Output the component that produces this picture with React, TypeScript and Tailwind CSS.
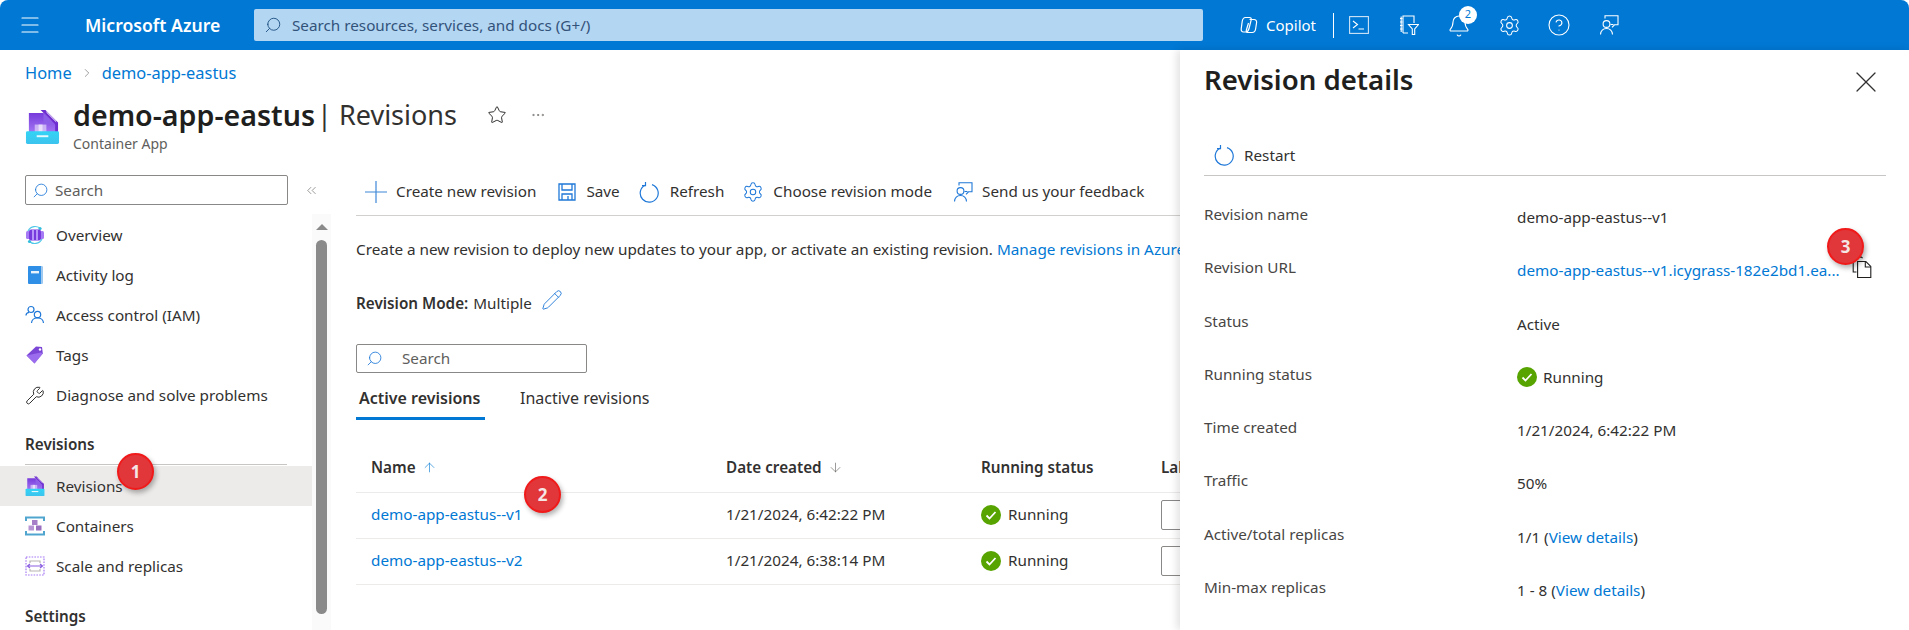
import React from "react";
import { ArrowDown, ArrowUp, Bell, ChevronRight, ChevronsLeft, CircleHelp, Ellipsis, Menu, Pencil, Search, Settings, Star, Wrench, X } from "lucide-react";

// small drawn icons, the ones the icon pack has no match for
function AppIcon({ size = 18 }: { size?: number }) {
  return (
    <svg width={size} height={size} viewBox="0 0 36 36">
      <defs>
        <linearGradient id="doc" x1="0" y1="0" x2="0" y2="1">
          <stop offset="0" stopColor="#773adc" />
          <stop offset="1" stopColor="#a67af4" />
        </linearGradient>
        <linearGradient id="tray" x1="0" y1="0" x2="0" y2="1">
          <stop offset="0" stopColor="#32d4f5" />
          <stop offset="1" stopColor="#3cc3ee" />
        </linearGradient>
      </defs>
      <path d="M8 1h13l13 13v12H27V12L16 1z" fill="#6f2fd0" />
      <path d="M4 4h15l12 12v10H4z" fill="url(#doc)" />
      <path d="M19 4l12 12H19z" fill="#8d5ee8" />
      <path d="M22 3l10 10" stroke="#fff" strokeWidth="1" />
      <rect x="10" y="16" width="12" height="11" fill="#d7c6f7" opacity="0.8" />
      <rect x="14" y="16" width="4" height="11" fill="#efe8fd" opacity="0.8" />
      <rect x="1" y="23" width="34" height="13" rx="1.5" fill="url(#tray)" />
      <rect x="12" y="27" width="12" height="2" fill="#e6f9fd" />
    </svg>
  );
}

function OverviewIcon() {
  return (
    <svg width="20" height="20" viewBox="0 0 20 20">
      <path d="M3 6a8 8 0 0 1 13-2M17 14a8 8 0 0 1-13 2" fill="none" stroke="#50c8e8" strokeWidth="1.2" />
      <circle cx="15" cy="3.5" r="1.6" fill="#32bedd" />
      <circle cx="4.5" cy="16.5" r="1.6" fill="#32bedd" />
      <rect x="1" y="6" width="4" height="8" rx="1.5" fill="#a67af4" />
      <rect x="15" y="6" width="4" height="8" rx="1.5" fill="#a67af4" />
      <rect x="4" y="4.5" width="12" height="11" rx="2" fill="#773adc" />
      <rect x="7" y="4.5" width="2" height="11" fill="#b796f9" />
      <rect x="11" y="4.5" width="2" height="11" fill="#b796f9" />
    </svg>
  );
}

function ActivityIcon() {
  return (
    <svg width="20" height="20" viewBox="0 0 20 20">
      <rect x="3" y="1" width="14.5" height="18" rx="1" fill="#2f8fe6" />
      <path d="M16 1h.5a1 1 0 0 1 1 1v16a1 1 0 0 1-1 1H16z" fill="#a3c9ec" />
      <rect x="6" y="6" width="8" height="2.4" fill="#eaf3fc" />
    </svg>
  );
}

function AccessIcon() {
  return (
    <svg width="20" height="20" viewBox="0 0 20 20" fill="none" stroke="#1f78d8" strokeWidth="1.2">
      <circle cx="6" cy="4.5" r="3" />
      <circle cx="12.5" cy="9.5" r="3.2" />
      <path d="M1 10.5c0-2 1.5-3 3-3.2M6.5 18c.2-3 2.5-5 6-5s5.8 2 6 5" />
    </svg>
  );
}

function TagIcon() {
  return (
    <svg width="20" height="20" viewBox="0 0 20 20">
      <path d="M1.5 10.5 11 1.5l6 .5.8 6.5L9.5 18.5z" fill="#7b46d6" />
      <path d="M1.5 10.5 9.5 18.5l8.3-10-2-1z" fill="#a67af4" opacity="0.75" />
      <circle cx="15" cy="4.5" r="1.2" fill="#fff" />
    </svg>
  );
}

function ContainersIcon() {
  return (
    <svg width="20" height="20" viewBox="0 0 20 20">
      <path d="M1 5V1.5h18V5M1 15v3.5h18V15" fill="none" stroke="#50a5cf" strokeWidth="2" />
      <rect x="7" y="4" width="5.5" height="5" fill="#a67fc8" />
      <rect x="3.5" y="9.5" width="5.5" height="5" fill="#b795d4" />
      <rect x="11" y="9.5" width="5.5" height="5" fill="#9a6fc0" />
    </svg>
  );
}

function ScaleIcon() {
  return (
    <svg width="20" height="20" viewBox="0 0 20 20" fill="none">
      <rect x="1" y="1" width="18" height="18" stroke="#a67af4" strokeWidth="1.2" strokeDasharray="1.6 1.2" />
      <path d="M5 7V5h10v2M5 13v2h10v-2" stroke="#b8b6b4" strokeWidth="1.2" />
      <path d="M2.5 10h15M5 8l-2.5 2L5 12M15 8l2.5 2L15 12" stroke="#8a5fe0" strokeWidth="1.2" />
    </svg>
  );
}

function PlusIcon() {
  return (
    <svg width="22" height="22" viewBox="0 0 22 22" fill="none" stroke="#3f87d8" strokeWidth="1.2">
      <path d="M11 0v22M0 11h22" />
    </svg>
  );
}

function RefreshIcon() {
  return (
    <svg width="20" height="22" viewBox="0 0 20 22" fill="none" stroke="#1f78d8" strokeWidth="1.2">
      <path d="M6 4.2a9 9 0 1 0 7-.6" />
      <path d="M6.5 1v3.6H3" />
    </svg>
  );
}

function SaveIcon() {
  return (
    <svg width="18" height="18" viewBox="0 0 18 18" fill="none" stroke="#1f78d8" strokeWidth="1.3">
      <path d="M1 1h16v16H1z" />
      <path d="M4 1v6h10V1M4 17v-6h10v6M10 13v4" />
    </svg>
  );
}

function FeedbackIcon({ color, size = 20 }: { color: string; size?: number }) {
  return (
    <svg width={size} height={size} viewBox="0 0 20 20" fill="none" stroke={color} strokeWidth="1.1">
      <circle cx="7.5" cy="9" r="3.4" />
      <path d="M1.5 19.5c.3-3.5 2.5-6 6-6s5.7 2.5 6 6" />
      <path d="M6 3.5V.8h13v9h-3.5L13 12.3" />
      <path d="M11.5 9.500h3" />
    </svg>
  );
}

function TerminalIcon() {
  return (
    <svg width="20" height="20" viewBox="0 0 20 20" fill="none" stroke="#fff" strokeWidth="1.1">
      <rect x="0.6" y="1.6" width="18.8" height="16.8" stroke="#cfe4f6" />
      <path d="M4 6l4.5 3.5L4 13M9.5 14H15" />
    </svg>
  );
}

function FilterBookIcon() {
  return (
    <svg width="20" height="20" viewBox="0 0 20 20" fill="none" stroke="#fff" strokeWidth="1.1">
      <path d="M4 18V1h11v7M4 18h5" />
      <path d="M1 3.5h2.5M1 7h2.5M1 10.5h2.5M1 14h2.5M2.2 1.5V17" />
      <path d="M9.5 9.5h10L15.7 14v5.5h-2.4V14z" />
    </svg>
  );
}

function CopilotIcon() {
  return (
    <svg width="18" height="18" viewBox="0 0 18 18" fill="none" stroke="#fff" strokeWidth="1.2">
      <path d="M5.5 1.5h4c1.4 0 2 1 1.7 2.3L9 12.5c-.5 2-1.500 3.5-3.500 3.5h-2C1.800 16 1 14.700 1.200 13l1-7.500C2.600 3 3.700 1.500 5.500 1.500z" />
      <path d="M9.5 3.5H14c1.800 0 2.800 1.300 2.600 3l-1 6.500c-.4 2.500-1.500 3.500-3.400 3.500H8c-1.300 0-2-1-1.700-2.300L8.500 7" />
    </svg>
  );
}

function CopyIcon() {
  return (
    <svg width="20" height="22" viewBox="0 0 18 20" fill="none" stroke="#201f1e" strokeWidth="1">
      <path d="M4 14.5H1V1h7.5l1 1" />
      <path d="M5 5h7.5L17 9.5v10H5z" />
      <path d="M12 5v5h5" />
    </svg>
  );
}

function RunningIcon({ size = 20 }: { size?: number }) {
  return (
    <svg width={size} height={size} viewBox="0 0 20 20">
      <circle cx="10" cy="10" r="10" fill="#57a300" />
      <path d="M5.5 10.5l3 3 6-6.5" fill="none" stroke="#fff" strokeWidth="1.8" />
    </svg>
  );
}

function Marker({ n, className }: { n: number; className: string }) {
  return (
    <div className={`absolute flex h-[37px] w-[37px] items-center justify-center rounded-full border-2 border-[#f11a1a] bg-[#e1363a] text-[17px] font-bold text-[#f5e6e6] shadow-[2px_3px_5px_rgba(0,0,0,0.3)] ${className}`}>
      {n}
    </div>
  );
}

const topNav = [
  { label: "Overview", icon: <OverviewIcon /> },
  { label: "Activity log", icon: <ActivityIcon /> },
  { label: "Access control (IAM)", icon: <AccessIcon /> },
  { label: "Tags", icon: <TagIcon /> },
  { label: "Diagnose and solve problems", icon: <Wrench size={21} strokeWidth={1.2} className="text-[#323130]" /> },
];

const revisionNav = [
  { label: "Revisions", icon: <AppIcon size={20} />, active: true },
  { label: "Containers", icon: <ContainersIcon /> },
  { label: "Scale and replicas", icon: <ScaleIcon /> },
];

const revisions = [
  { name: "demo-app-eastus--v1", created: "1/21/2024, 6:42:22 PM" },
  { name: "demo-app-eastus--v2", created: "1/21/2024, 6:38:14 PM" },
];

const commands = [
  { label: "Create new revision", icon: <PlusIcon />, cls: "ml-[9px] gap-[9px]" },
  { label: "Save", icon: <SaveIcon />, cls: "ml-[22px] gap-[10px]" },
  { label: "Refresh", icon: <RefreshIcon />, cls: "ml-[19px] gap-[11px]" },
  { label: "Choose revision mode", icon: <Settings size={22} strokeWidth={1.1} className="text-[#1f78d8]" />, cls: "ml-[18px] gap-[9px]" },
  { label: "Send us your feedback", icon: <FeedbackIcon color="#1f78d8" />, cls: "ml-[21px] gap-[9px]" },
];

function NavRow({ label, icon, active }: { label: string; icon: React.ReactNode; active?: boolean }) {
  return (
    <div className={`flex h-[40px] items-center gap-[11px] pl-[25px] text-[#323130] ${active ? "bg-[#edebe9]" : ""}`}>
      <span className="flex w-[20px] justify-center">{icon}</span>
      <span>{label}</span>
    </div>
  );
}

function DetailRow({ label, children }: { label: string; children: React.ReactNode }) {
  return (
    <div className="flex h-[53.3px] items-start">
      <div className="w-[313px] leading-[24px] text-[#484644]">{label}</div>
      <div className="mt-[3px] flex items-center leading-[24px] text-[#323130]">{children}</div>
    </div>
  );
}

export default function App() {
  return (
    <div className="flex h-[630px] flex-col overflow-hidden bg-white font-['Noto_Sans','Open_Sans',sans-serif] text-[15.25px] text-[#323130]">
      {/* top bar */}
      <header className="flex h-[50px] shrink-0 items-center rounded-t-[8px] bg-[#0078d4] text-white">
        <Menu size={24} strokeWidth={1.2} className="ml-[18px] shrink-0" />
        <span className="ml-[43px] w-[169px] shrink-0 text-[17.6px] font-semibold">Microsoft Azure</span>
        <div className="flex h-[32px] w-[949px] shrink-0 items-center rounded-[2px] bg-[#b3d6f2] pl-[10px] text-[#32527a]">
          <Search size={18} strokeWidth={1.2} className="scale-x-[-1] text-[#1c4e80]" />
          <span className="ml-[10px]">Search resources, services, and docs (G+/)</span>
        </div>
        <div className="ml-[37px] flex items-center gap-[8px]">
          <CopilotIcon />
          <span className="text-[15px]">Copilot</span>
        </div>
        <div className="ml-[17px] h-[25px] w-px bg-white" />
        <div className="ml-[15px]"><TerminalIcon /></div>
        <div className="ml-[30px]"><FilterBookIcon /></div>
        <div className="relative ml-[28px] mt-[1px]">
          <Bell size={24} strokeWidth={1.1} />
          <div className="absolute left-[12px] top-[-8px] flex h-[18px] w-[18px] items-center justify-center rounded-full bg-white text-[11px] text-[#0078d4]">2</div>
        </div>
        <Settings size={23} strokeWidth={1.1} className="ml-[27px]" />
        <CircleHelp size={24} strokeWidth={1.1} className="ml-[26px]" />
        <div className="ml-[28px]"><FeedbackIcon color="#fff" /></div>
      </header>

      <div className="flex min-h-0 flex-1">
        {/* blade behind the panel */}
        <div className="relative w-[1180px] shrink-0 overflow-hidden">
          <nav className="ml-[25px] mt-[11px] flex h-[24px] items-center text-[16.4px] text-[#0078d4]">
            <span>Home</span>
            <ChevronRight size={14} strokeWidth={1} className="mx-[8px] text-[#605e5c]" />
            <span>demo-app-eastus</span>
          </nav>

          <div className="flex h-[75px] pl-[25px] pt-[11px]">
            <div className="mt-[13px]"><AppIcon size={35} /></div>
            <div className="ml-[13px]">
              <h1 className="flex h-[38px] items-center whitespace-nowrap">
                <span className="text-[28.6px] font-semibold text-[#201f1e]">demo-app-eastus</span>
                <span className="ml-[2px] text-[27px] text-[#323130]">| Revisions</span>
              </h1>
              <div className="text-[14px] leading-[20px] text-[#605e5c]">Container App</div>
            </div>
            <Star size={20} strokeWidth={1.2} className="ml-[30px] mt-[9px] text-[#323130]" />
            <Ellipsis size={16} strokeWidth={1} className="ml-[23px] mt-[11px] text-[#605e5c]" />
          </div>

          <div className="flex h-[470px]">
            {/* left menu */}
            <aside className="flex w-[332px] shrink-0 flex-col">
              <div className="flex h-[54px] items-start pl-[25px] pt-[15px]">
                <div className="flex h-[30px] w-[263px] items-center rounded-[2px] border border-[#8a8886] pl-[6px] text-[#605e5c]">
                  <Search size={17} strokeWidth={1.2} className="scale-x-[-1] text-[#1f78d8]" />
                  <span className="ml-[6px]">Search</span>
                </div>
                <ChevronsLeft size={15} strokeWidth={1} className="ml-[16px] mt-[8px] text-[#605e5c]" />
              </div>
              <div className="flex min-h-0 flex-1">
                <div className="relative w-[312px]">
                  <div className="pt-px">
                    {topNav.map((item) => (
                      <NavRow key={item.label} {...item} />
                    ))}
                  </div>
                  <div className="mx-[25px] flex h-[50px] items-center border-b border-[#c8c6c4] pt-[10px] font-semibold">Revisions</div>
                  <div className="pt-px">
                    {revisionNav.map((item) => (
                      <NavRow key={item.label} {...item} />
                    ))}
                  </div>
                  <div className="ml-[25px] mt-[18px] font-semibold leading-[24px]">Settings</div>
                  <Marker n={1} className="left-[117px] top-[239px]" />
                </div>
                <div className="flex w-[19px] flex-col items-center bg-[#fafafa]">
                  <div className="mt-[10px] h-0 w-0 border-x-[6px] border-b-[6px] border-x-transparent border-b-[#8a8a8a]" />
                  <div className="mt-[10px] h-[374px] w-[11px] rounded-full bg-[#8a8a8a]" />
                </div>
              </div>
            </aside>

            {/* revisions list */}
            <main className="relative min-w-0 flex-1 pl-[24px]">
              <div className="flex h-[56px] items-center border-b border-[#d2d0ce] pt-[8px]">
                {commands.map((c) => (
                  <div key={c.label} className={`flex items-center whitespace-nowrap ${c.cls}`}>
                    {c.icon}
                    <span>{c.label}</span>
                  </div>
                ))}
              </div>

              <p className="mt-[21px] whitespace-nowrap text-[15.3px] leading-[24px]">
                Create a new revision to deploy new updates to your app, or activate an existing revision.{" "}
                <span className="text-[#0078d4]">Manage revisions in Azure Container Apps</span>
              </p>

              <div className="mt-[30px] flex h-[24px] items-center">
                <span className="font-semibold">Revision Mode:</span>
                <span className="ml-[5px]">Multiple</span>
                <Pencil size={22} strokeWidth={1} className="ml-[9px] mt-[-6px] text-[#1f78d8]" />
              </div>

              <div className="mt-[29px] flex h-[29px] w-[231px] items-center rounded-[2px] border border-[#8a8886] pl-[9px] text-[#605e5c]">
                <Search size={17} strokeWidth={1.2} className="scale-x-[-1] text-[#1f78d8]" />
                <span className="ml-[19px]">Search</span>
              </div>

              <div className="flex h-[47px]">
                <div className="flex w-[129px] items-center border-b-[3px] border-[#0078d4] pl-[3px] pt-[6px] text-[16px] font-semibold whitespace-nowrap">Active revisions</div>
                <div className="ml-[35px] flex items-center pt-[3px] text-[16px] whitespace-nowrap">Inactive revisions</div>
              </div>

              <div className="flex h-[73px] items-end border-b border-[#edebe9] pb-[13px] font-semibold text-[#323130]">
                <div className="flex w-[355px] shrink-0 items-center pl-[15px]">Name<ArrowUp size={15} strokeWidth={1} className="ml-[6px] text-[#0078d4]" /></div>
                <div className="flex w-[255px] shrink-0 items-center pl-[15px]">Date created<ArrowDown size={15} strokeWidth={1} className="ml-[6px] text-[#605e5c]" /></div>
                <div className="w-[180px] shrink-0 pl-[15px]">Running status</div>
                <div className="shrink-0 pl-[15px]">Label</div>
              </div>
              {revisions.map((r) => (
                <div key={r.name} className="flex h-[46px] items-center border-b border-[#edebe9] pb-[2px]">
                  <div className="w-[355px] shrink-0 pl-[15px] text-[#0078d4]">{r.name}</div>
                  <div className="w-[255px] shrink-0 pl-[15px]">{r.created}</div>
                  <div className="flex w-[180px] shrink-0 items-center gap-[7px] pl-[15px]">
                    <RunningIcon />
                    <span>Running</span>
                  </div>
                  <div className="ml-[15px] h-[30px] w-[120px] shrink-0 rounded-[2px] border border-[#8a8886]" />
                </div>
              ))}
              <Marker n={2} className="left-[192px] top-[316px]" />
            </main>
          </div>
        </div>

        {/* details panel */}
        <section className="relative z-10 min-w-0 flex-1 bg-white pl-[24px] pr-[23px] shadow-[-3px_0_8px_rgba(0,0,0,0.12)]">
          <div className="flex h-[60px] items-center justify-between">
            <h2 className="text-[27.6px] font-semibold text-[#201f1e]">Revision details</h2>
            <X size={36} strokeWidth={0.8} className="mr-[2px] mt-[4px] text-[#323130]" />
          </div>
          <div className="mt-[22px] flex h-[44px] items-start border-b border-[#c8c6c4] pl-[10px] pt-[12px]">
            <RefreshIcon />
            <span className="ml-[10px]">Restart</span>
          </div>
          <div className="mt-[26px]">
            <DetailRow label="Revision name">demo-app-eastus--v1</DetailRow>
            <DetailRow label="Revision URL">
              <span className="whitespace-nowrap text-[#0078d4]">demo-app-eastus--v1.icygrass-182e2bd1.ea...</span>
              <span className="ml-[12px] mt-[-6px] flex"><CopyIcon /></span>
            </DetailRow>
            <DetailRow label="Status">Active</DetailRow>
            <DetailRow label="Running status">
              <RunningIcon />
              <span className="ml-[6px]">Running</span>
            </DetailRow>
            <DetailRow label="Time created">1/21/2024, 6:42:22 PM</DetailRow>
            <DetailRow label="Traffic">50%</DetailRow>
            <DetailRow label="Active/total replicas">
              <span className="whitespace-pre">1/1 (<span className="text-[#0078d4]">View details</span>)</span>
            </DetailRow>
            <DetailRow label="Min-max replicas">
              <span className="whitespace-pre">1 - 8 (<span className="text-[#0078d4]">View details</span>)</span>
            </DetailRow>
          </div>
          <Marker n={3} className="left-[647px] top-[178px]" />
        </section>
      </div>
    </div>
  );
}
